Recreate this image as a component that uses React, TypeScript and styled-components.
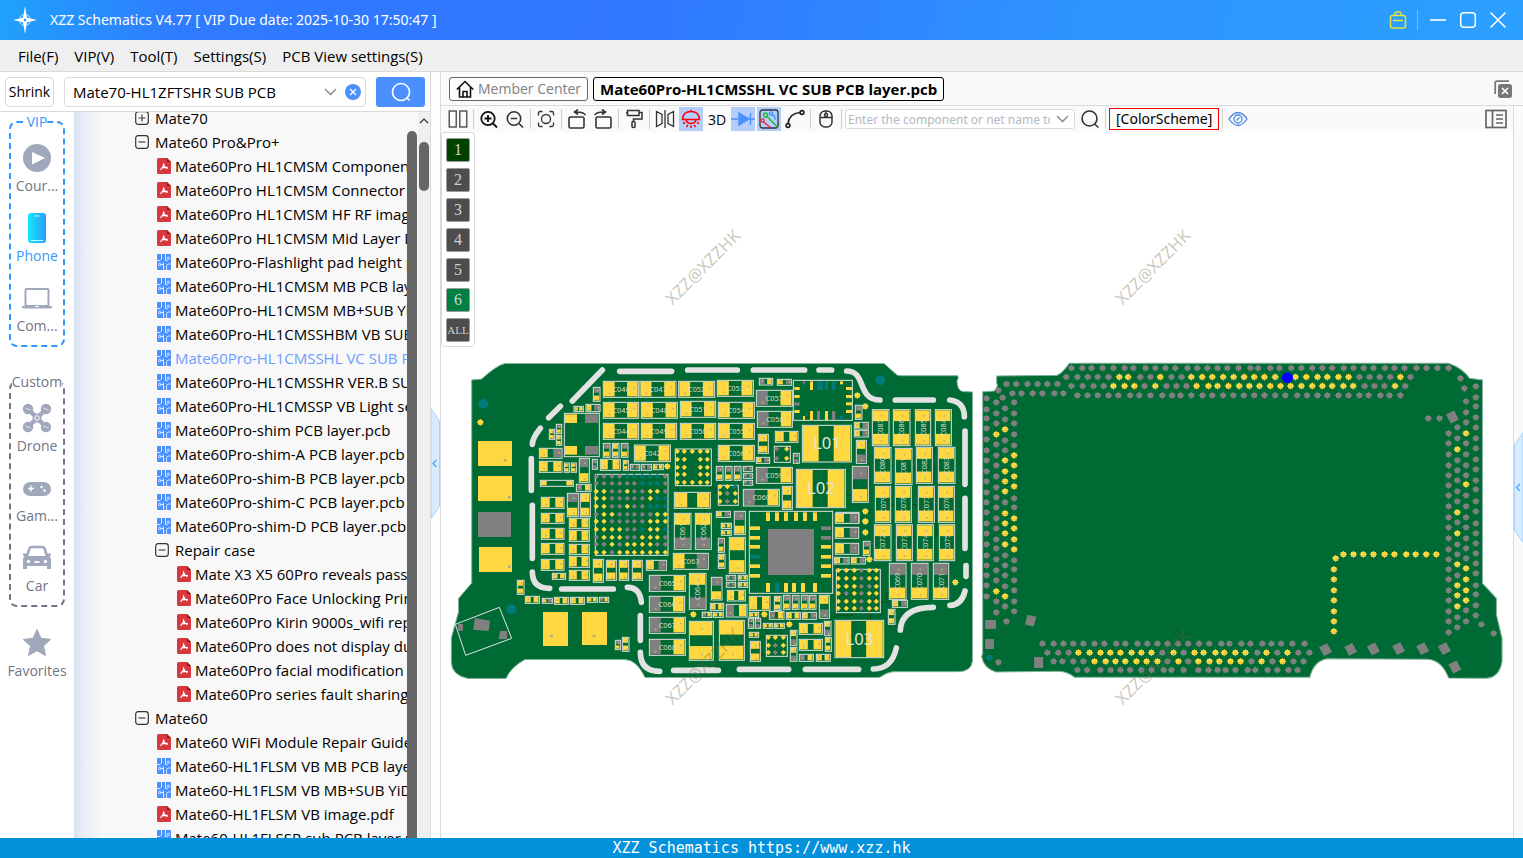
import React from "react";
import styled, { createGlobalStyle, css } from "styled-components";

const Global = createGlobalStyle`
  * { box-sizing: border-box; }
  html, body { margin: 0; height: 100%; }
  body { font-family: "Open Sans", "Noto Sans", sans-serif; font-size: 15px; color: #000; background: #fff; }
  #root { height: 100%; }
  button, input { font: inherit; color: inherit; }
  button { padding: 0; border: 0; background: none; cursor: pointer; }
  ul { list-style: none; margin: 0; padding: 0; }
  svg { display: block; flex: none; }
`;

/* ---------- window chrome ---------- */

const Page = styled.div`
  height: 100vh;
  display: flex;
  flex-direction: column;
  overflow: hidden;
`;

const TitleBar = styled.header`
  height: 40px;
  flex: none;
  display: flex;
  align-items: center;
  padding: 0 10px 0 12px;
  color: #fff;
  background: linear-gradient(100deg, #1fa2fb 0%, #2f7bff 12%, #3076ff 40%, #2e93ff 70%, #2ba0ff 100%);
`;

const AppTitle = styled.h1`
  margin: 0 auto 0 12px;
  font-family: "Noto Sans", sans-serif;
  font-size: 14px;
  line-height: 22px;
  font-weight: 400;
`;

const WindowButton = styled.button`
  width: 30px;
  height: 30px;
  display: grid;
  place-items: center;
`;

const TitleDivider = styled.span`
  width: 1px;
  height: 20px;
  margin: 0 5px 0 4px;
  background: #6fbdff;
`;

const MenuBar = styled.nav`
  height: 32px;
  flex: none;
  display: flex;
  align-items: center;
  gap: 16px;
  padding: 0 18px;
  background: #efefef;
  border-bottom: 1px solid #dadada;
`;

const MenuButton = styled.button`
  line-height: 24px;
`;

const Body = styled.div`
  flex: 1;
  min-height: 0;
  display: flex;
`;

const StatusBar = styled.footer`
  height: 20px;
  flex: none;
  line-height: 20px;
  text-align: center;
  color: #fff;
  background: #0391dc;
  font-family: "DejaVu Sans Mono", monospace;
  font-size: 15px;
`;

/* ---------- left panel ---------- */

const SidePanel = styled.aside`
  width: 431px;
  flex: none;
  display: flex;
  flex-direction: column;
  border-right: 1px solid #dadada;
`;

const SearchRow = styled.form`
  height: 40px;
  flex: none;
  display: flex;
  align-items: center;
  padding: 0 5px;
  border-bottom: 1px solid #dadada;
`;

const ShrinkButton = styled.button`
  width: 49px;
  height: 30px;
  border: 1px solid #dadada;
  border-radius: 4px;
  background: #fff;
  font-size: 14px;
`;

const Combo = styled.div`
  width: 302px;
  height: 30px;
  margin: 0 10px;
  display: flex;
  align-items: center;
  gap: 8px;
  padding: 0 4px 0 8px;
  border: 1px solid #dadada;
  border-radius: 4px;
`;

const ComboInput = styled.input`
  flex: 1;
  min-width: 0;
  height: 26px;
  padding: 0;
  border: 0;
  outline: 0;
  background: transparent;
  &::placeholder { color: #b4b8c2; opacity: 1; }
`;

const SearchButton = styled.button`
  width: 49px;
  height: 30px;
  display: grid;
  place-items: center;
  border-radius: 3px;
  background: #4c90ff;
`;

const SideBody = styled.div`
  flex: 1;
  min-height: 0;
  display: flex;
`;

const Rail = styled.nav`
  width: 74px;
  flex: none;
  overflow: hidden;
  font-size: 14px;
`;

const RailGroup = styled.fieldset<{ $tone: string; $last?: boolean }>`
  width: 56px;
  min-width: 0;
  margin: 0 9px ${(p) => (p.$last ? 21 : 25)}px;
  padding: 11px 0 9px;
  border: 2px dashed ${(p) => p.$tone};
  border-radius: 8px;
`;

const RailLegend = styled.legend<{ $tone: string }>`
  margin: 0 auto;
  padding: 0;
  line-height: 20px;
  color: ${(p) => p.$tone};
`;

const RailItem = styled.button<{ $active?: boolean }>`
  width: 100%;
  display: flex;
  flex-direction: column;
  align-items: center;
  gap: 3px;
  line-height: 20px;
  white-space: nowrap;
  color: ${(p) => (p.$active ? "#3b97fb" : "#6f7688")};
  & + & { margin-top: 17px; }
`;

const TreePanel = styled.div`
  flex: 1;
  min-width: 0;
  overflow: hidden;
  background: linear-gradient(90deg, #d6e0f2 0, #e9eef6 10px, #f8f8f8 28px);
`;

const Tree = styled.ul`
  margin-top: -6px;
`;

const TreeRow = styled.button<{ $depth: number; $folder: boolean; $selected?: boolean }>`
  height: 24px;
  width: 100%;
  display: flex;
  align-items: center;
  gap: ${(p) => (p.$folder ? 6 : 3)}px;
  padding-left: ${(p) => (p.$folder ? 61 : 62) + p.$depth * 20}px;
  white-space: nowrap;
  overflow: hidden;
  color: ${(p) => (p.$selected ? "#6f9dff" : "#000")};
`;

const InnerScroll = styled.div`
  width: 10px;
  flex: none;
  padding-top: 19px;
  display: flex;
  background: #f8f8f8;
`;

const InnerThumb = styled.div`
  flex: 1;
  border-radius: 5px 5px 0 0;
  background: #666;
`;

const OuterScroll = styled.div`
  width: 13px;
  flex: none;
  display: flex;
  flex-direction: column;
  align-items: center;
  background: #efefef;
  border-left: 1px solid #f8f8f8;
`;

const ScrollArrow = styled.button`
  height: 18px;
  width: 100%;
  display: grid;
  place-items: center;
`;

const OuterThumb = styled.div`
  width: 10px;
  height: 49px;
  margin-top: 12px;
  border-radius: 5px;
  background: #666;
`;

const CollapseStrip = styled.div<{ $right?: boolean }>`
  width: 10px;
  flex: none;
  background: ${(p) => (p.$right ? "#fafafa" : "#fcfffa")};
  ${(p) =>
    p.$right
      ? css`padding-top: 326px; border-left: 1px solid #dadada;`
      : css`padding-top: 336px; border-right: 1px solid #dadada;`}
`;

/* ---------- main panel ---------- */

const Main = styled.main`
  flex: 1;
  min-width: 0;
  display: flex;
  flex-direction: column;
`;

const TabRow = styled.div`
  height: 34px;
  flex: none;
  display: flex;
  align-items: center;
  gap: 5px;
  padding: 0 8px;
  background: #fafafa;
  border-bottom: 1px solid #dadada;
`;

const Tab = styled.button<{ $active?: boolean }>`
  height: 24px;
  display: flex;
  align-items: center;
  gap: 4px;
  padding: 0 6px;
  border: 1px solid ${(p) => (p.$active ? "#000" : "#666")};
  border-radius: 3px;
  background: #fdfdfd;
  color: ${(p) => (p.$active ? "#000" : "#808080")};
  font-size: ${(p) => (p.$active ? 15 : 14)}px;
  font-weight: ${(p) => (p.$active ? 700 : 400)};
  line-height: 20px;
`;

const CloseAll = styled.button`
  margin-left: auto;
  width: 24px;
  height: 24px;
  display: grid;
  place-items: center;
`;

const Workspace = styled.div`
  flex: 1;
  min-height: 0;
  display: flex;
`;

const Viewer = styled.section`
  flex: 1;
  min-width: 0;
  display: flex;
  flex-direction: column;
`;

const Toolbar = styled.div`
  height: 26px;
  flex: none;
  display: flex;
  align-items: center;
  gap: 2px;
  padding: 0 5px;
  background: #fafafa;
`;

const Tool = styled.button<{ $on?: boolean }>`
  width: 24px;
  height: 24px;
  flex: none;
  display: grid;
  place-items: center;
  font-size: 14px;
  background: ${(p) => (p.$on ? "#b5cdfb" : "transparent")};
`;

const ToolDivider = styled.span`
  width: 1px;
  height: 20px;
  flex: none;
  margin: 0 1px;
  background: #cfcfcf;
`;

const NetSearch = styled.div`
  width: 230px;
  height: 20px;
  margin-right: 1px;
  flex: none;
  display: flex;
  align-items: center;
  gap: 6px;
  padding: 0 5px 0 2px;
  border: 1px solid #dadada;
  border-radius: 3px;
  background: #fff;
  font-family: "Noto Sans", sans-serif;
  font-size: 12px;
`;

const ColorScheme = styled.button`
  height: 22px;
  flex: none;
  padding: 0 6px;
  border: 1px solid #f00;
  font-family: "Noto Sans", sans-serif;
  font-size: 14px;
  line-height: 20px;
`;

const PanelToggle = styled(Tool)`
  margin-left: auto;
`;

const Canvas = styled.div`
  flex: 1;
  min-height: 0;
  position: relative;
  overflow: hidden;
  background: #fff;
`;

const LayerPalette = styled.div`
  position: absolute;
  top: 0;
  left: 0;
  display: flex;
  flex-direction: column;
  gap: 6px;
  padding: 5px 4px 4px;
  border: 1px solid #dadada;
  border-radius: 3px;
  background: #fff;
`;

const LayerButton = styled.button<{ $fill: string; $wide?: boolean }>`
  width: 24px;
  height: 24px;
  border: 1px solid #9a9a9a;
  border-radius: 2px;
  background: ${(p) => p.$fill};
  color: #d0d0d0;
  font-family: "Liberation Serif", serif;
  font-size: ${(p) => (p.$wide ? 11 : 16)}px;
  line-height: 22px;
`;

/* ---------- small icons ---------- */

type IconProps = { children: React.ReactNode; size?: number; color?: string; sw?: number };
const Icon = ({ children, size = 20, color = "#333", sw = 1.5 }: IconProps) => (
  <svg width={size} height={size} viewBox={`0 0 ${size} ${size}`} fill="none" stroke={color} strokeWidth={sw}>
    {children}
  </svg>
);

const Chevron = ({ w = 13, color = "#8f949e" }: { w?: number; color?: string }) => (
  <svg width={w} height="8" viewBox="0 0 13 8" fill="none" stroke={color} strokeWidth="1.6">
    <path d="M1 1l5.500 5.500L12 1" />
  </svg>
);

const PdfIcon = () => (
  <svg width="16" height="16" viewBox="0 0 16 16">
    <path d="M1 1.500Q1 0 2.500 0H11l4 4v10.500Q15 16 13.500 16h-11Q1 16 1 14.500z" fill="#d7373f" />
    <path d="M11 0l4 4h-4z" fill="#8e1b22" />
    <path d="M7.600 5.200q.7 3-3.300 6.600M7.700 7q1 3.200 4.200 3.300M5.200 10.300q3-1.300 6.500-.8" stroke="#fff" strokeWidth="1.100" fill="none" />
  </svg>
);

const PcbIcon = () => (
  <svg width="16" height="16" viewBox="0 0 16 16">
    <rect x="1" width="14" height="16" rx="1" fill="#4c90ff" />
    <g stroke="#fff" strokeWidth=".8" fill="none">
      <path d="M5.500 0v5L4 6.500H1M9.500 0v6.500h2l1-1.200M4.800 10.500h2.700V16M7.500 10.500V8.500M10.500 16v-4.500l1.500-1.500h3" />
      <circle cx="12.500" cy="4.200" r="1.100" />
      <circle cx="3.700" cy="10.500" r="1.100" />
    </g>
  </svg>
);

const FolderBox = ({ open }: { open: boolean }) => (
  <Icon size={14} sw={1.2}>
    <rect x=".7" y=".7" width="12.600" height="12.600" rx="2.500" />
    <path d={open ? "M3.500 7h7" : "M3.500 7h7M7 3.500v7"} stroke="#444" />
  </Icon>
);

const G = "#a0a8bb";
const railIcons: Record<string, React.ReactNode> = {
  course: (
    <Icon size={30} sw={0}>
      <circle cx="15" cy="15" r="14" fill={G} />
      <path d="M10 9l13 6-13 6.500z" fill="#fff" />
    </Icon>
  ),
  phone: (
    <Icon size={30} sw={0}>
      <defs>
        <linearGradient id="phoneFill" x1="0" y1="0" x2="1" y2="0">
          <stop offset="0" stopColor="#12e8fb" />
          <stop offset="1" stopColor="#2e9cff" />
        </linearGradient>
      </defs>
      <rect x="6" y="0" width="18" height="30" rx="3" fill="url(#phoneFill)" />
      <path d="M13 3h4M9 27.500h12" stroke="#bff" strokeWidth="1.200" strokeLinecap="round" />
    </Icon>
  ),
  laptop: (
    <Icon size={30} sw={2} color={G}>
      <rect x="3.500" y="6" width="23" height="17" rx="1" />
      <path d="M0 23h30v1q0 1.500-2 1.500H2Q0 25.500 0 24z" fill={G} stroke="none" />
      <path d="M13 23.500h4" stroke="#fff" strokeWidth="1" />
    </Icon>
  ),
  drone: (
    <Icon size={30} sw={0}>
      <path d="M7 7l16 16M23 7L7 23" stroke={G} strokeWidth="4.500" />
      {[[6, 6], [24, 6], [6, 24], [24, 24]].map(([x, y]) => (
        <g key={`${x}-${y}`}>
          <circle cx={x} cy={y} r="5.200" fill={G} />
          <path d={`M${x - 2.5} ${y - 1}l5 2`} stroke="#fff" strokeWidth=".7" />
        </g>
      ))}
      <circle cx="15" cy="15" r="4.500" fill={G} />
      <circle cx="15" cy="15" r="2.300" fill="none" stroke="#fff" strokeWidth="1" />
    </Icon>
  ),
  game: (
    <Icon size={30} sw={0}>
      <rect x="1" y="9" width="28" height="14" rx="7" fill={G} />
      <path d="M9 12.500v6M6 15.500h6" stroke="#fff" strokeWidth="1.400" />
      <circle cx="19.500" cy="14" r="1.200" fill="#fff" />
      <circle cx="22.500" cy="17.500" r="1.200" fill="#fff" />
    </Icon>
  ),
  car: (
    <Icon size={30} sw={0}>
      <path d="M5 13L7.500 5.500Q8 4 10 4h10q2 0 2.500 1.500L25 13" fill="none" stroke={G} strokeWidth="2.500" />
      <path d="M1 10.500h4v2.500h20v-2.500h4v1.500l-1.500 1.500q1.500 1 1.500 3V26h-4v-3H5v3H1V16.500q0-2 1.500-3L1 12z" fill={G} />
      <path d="M12.500 19h5" stroke="#fff" strokeWidth="1.800" />
      <circle cx="6.500" cy="18.500" r="1.700" fill="#fff" />
      <circle cx="23.500" cy="18.500" r="1.700" fill="#fff" />
    </Icon>
  ),
  star: (
    <Icon size={30} sw={0}>
      <path d="M15 1.500l4 8.800 9.700 1.100-7.200 6.600 2 9.500-8.500-4.800-8.500 4.800 2-9.500L1.300 11.400l9.700-1.100z" fill={G} stroke={G} strokeWidth="1" strokeLinejoin="round" />
    </Icon>
  ),
};

/* ---------- circuit boards ---------- */

const C: Record<string, string> = { y: "#ffd740", g: "#808080", t: "#007a7a", n: "none" };
const BOARD = "#006a35";
const SILK = "#e2e2e2";
const MARK = "#bdb074";

const star = (x: number, y: number, r: number) => {
  const pts: string[] = [];
  for (let i = 0; i < 16; i++) {
    const a = (i * Math.PI) / 8;
    const k = i % 4 === 0 ? r : i % 2 === 0 ? r * 0.92 : r * 0.7;
    pts.push(`${(x + k * Math.cos(a)).toFixed(1)},${(y + k * Math.sin(a)).toFixed(1)}`);
  }
  return pts.join(" ");
};

const Star = ({ x, y, c = "y", r = 11 }: { x: number; y: number; c?: string; r?: number }) => (
  <polygon points={star(x, y, r)} fill={C[c]} />
);

/* One part per entry: direction, x, y, width, height, pad colours, designator. */
const Parts = ({ list }: { list: string }) => (
  <>
    {list
      .split(";")
      .map((s) => s.trim())
      .filter(Boolean)
      .map((s, i) => {
        const [d, xs, ys, ws, hs, pads = "yy", label] = s.split(/\s+/);
        const [x, y, w, h] = [xs, ys, ws, hs].map(Number);
        const flat = d === "h";
        const k = label ? 0.3 : 0.34;
        const pw = flat ? w * k : w - 5;
        const ph = flat ? h - 5 : h * k;
        return (
          <g key={i}>
            <rect x={x} y={y} width={w} height={h} fill={BOARD} stroke={SILK} strokeWidth="3" />
            <rect x={x + 2} y={y + 2} width={pw} height={ph} fill={C[pads[0]]} />
            <rect
              x={flat ? x + w - pw - 3 : x + 2}
              y={flat ? y + 2 : y + h - ph - 3}
              width={pw}
              height={ph}
              fill={C[pads[1]]}
            />
            <rect x={flat ? x + w - pw / 2 : x + w / 2} y={flat ? y + h / 3 : y + h - ph / 2} width="5" height="5" fill={MARK} />
            <rect x={flat ? x + pw / 2 : x + w / 2} y={flat ? y + h - 14 : y + ph / 2} width="5" height="5" fill={MARK} />
            {label && (
              <text
                x={x + w / 2}
                y={y + h / 2 + 8}
                fontSize="22"
                fill="#dcdcc8"
                textAnchor="middle"
                transform={flat ? undefined : `rotate(-90 ${x + w / 2} ${y + h / 2})`}
              >
                {label}
              </text>
            )}
          </g>
        );
      })}
  </>
);

const Inductor = ({ x, y, w, h, label }: { x: number; y: number; w: number; h: number; label: string }) => (
  <g>
    <rect x={x} y={y} width={w} height={h} fill={BOARD} stroke={SILK} strokeWidth="3" />
    <rect x={x + 2} y={y + 2} width={w * 0.32} height={h - 4} fill={C.y} />
    <rect x={x + w * 0.64} y={y + 2} width={w * 0.34} height={h - 4} fill={C.y} />
    <text x={x + w / 2} y={y + h / 2 + 17} fontSize="50" textAnchor="middle" fill="#e6e6d8">
      {label}
    </text>
  </g>
);

const Grid = ({ box, xs, ys, rows }: { box: number[]; xs: number[]; ys: number[]; rows: string[] }) => (
  <g>
    <rect x={box[0]} y={box[1]} width={box[2]} height={box[3]} fill={BOARD} stroke={SILK} strokeWidth="3" />
    {rows.map((r, j) =>
      r.split("").map((c, i) => {
        if (c === "-") return null;
        const [x, y] = [xs[i], ys[j]];
        return <path key={`${i}-${j}`} d={`M${x - 8} ${y}l4-4 4-4 4 4 4 4-4 4-4 4-4-4z`} fill={C[c]} />;
      })
    )}
  </g>
);

const Rects = ({ list }: { list: string }) => (
  <>
    {list.split(";").map((s, i) => {
      const [c, x, y, w, h] = s.trim().split(/\s+/);
      return <rect key={i} x={x} y={y} width={w} height={h} fill={C[c]} />;
    })}
  </>
);

const Silk = ({ d }: { d: string }) => (
  <path d={d} fill="none" stroke={SILK} strokeWidth="17" strokeLinecap="round" />
);

const Trace = ({ d }: { d: string }) => <path d={d} stroke="#004c10" strokeWidth="2.5" fill="none" />;

const LeftBoard = () => (
  <g fontFamily="'Noto Sans', sans-serif">
    <path
      fill={BOARD}
      stroke="#7fb499"
      d="M471.700 380l10-1Q497 365 505 363.500H884L897 375q2 .7 5 .7h55.700q1.500 2-.7 5 0 10 6 10.800l9.500.5V660q-.5 12-15.500 11.700H893q-7 1-11 4.300-2 1.500-4 1.500H645Q637 660 625 659.500H525q-14 7.500-19 19H468Q451.500 675 451.300 662v-24l7.200-26V598.500l13.200-15.500z"
    />
    <g transform="translate(445 355) scale(.33333)">
      <Trace d="M385 345v40M620 475v30h60M700 395v90M800 390l20 20M300 290v30M778 455v20M640 610v30" />
      <Silk d="M472 45L382 138M524 49H680M728 45H877M346 154L311 188M286 220Q262 250 262 268M259 311V406M262 451V610" />
      <Rects list="y 99 258 102 75;y 99 363 102 75;g 99 471 99 75;y 102 576 99 75" />
      <g fill={MARK}>
        <rect x="176" y="312" width="8" height="8" />
        <rect x="189" y="423" width="8" height="8" />
        <rect x="189" y="631" width="8" height="8" />
      </g>
      <circle cx="115" cy="146" r="15" fill="#007a7a" />
      <Star x={106} y={202} />
      <Star x={667} y={334} />
      <rect x="358" y="175" width="105" height="130" fill="none" stroke={SILK} strokeWidth="3" />
      <Rects list="y 360 178 36 26;g 420 178 40 26;y 360 273 36 26;g 420 273 40 26" />
      <Parts
        list="h 475 79 106 48 yy C046;h 585 79 108 48 yy C047;h 701 79 108 48 yy C052;
        h 475 142 106 48 yy C045;h 589 142 108 48 yy C048;h 706 139 106 48 yy C051;
        h 475 205 106 48 yy C044;h 589 205 106 48 yy C049;h 706 205 106 48 yy C050;
        h 568 270 108 50 yy C042;v 445 97 20 42 gy;h 387 154 28 16 yy;h 423 148 42 22 yg;
        v 313 223 16 30;v 334 208 16 28 gy;v 334 241 16 30;h 283 280 68 30 yg;h 283 319 68 33;
        v 358 324 15 28;v 379 324 15 28;v 403 310 30 72 gy;h 394 388 44 21 gy;
        h 289 427 68 33;h 289 475 68 30;v 367 415 33 70 gy;v 406 415 30 70;
        v 442 313 15 30 gg;h 466 313 60 33;v 475 265 20 42 gy;v 502 265 20 42;v 529 265 20 42 gy;
        v 535 316 15 30;h 556 328 28 18 gg;h 589 328 30 18 gg;h 625 328 30 16;
        h 688 412 108 48;v 688 475 50 108 yg C061;v 751 475 48 108 yg C062;"
      />
      <rect x="286" y="376" width="99" height="18" fill={BOARD} stroke={SILK} strokeWidth="3" />
      <Rects list="y 288 378 17 13;y 364 378 19 13" />
      <Grid
        box={[451, 358, 218, 243]}
        xs={[454, 477, 501, 524, 547, 568, 592, 616, 637, 661]}
        ys={[364, 385, 409, 430, 454, 478, 499, 523, 547, 568, 592]}
        rows={["ggggtttttg", "ggggggtttg", "yyggyggyyg", "yygggggytt", "yyggyggttt", "gyygggggyy", "yygggggyyy", "yyyyggtyyt", "gyyyggyyyg", "ggygyyyygg", "yygyyyyyyy"]}
      />
      <Grid
        box={[691, 282, 108, 110]}
        xs={[697, 718, 742, 766, 787]}
        ys={[289, 313, 337, 358, 382]}
        rows={["yyyyy", "yy-yy", "yy-yy", "yy-yy", "yyyyy"]}
      />
    </g>
    <g transform="translate(445 515) scale(.33333)">
      <Silk d="M262 171Q262 220 314 220M350 222H505M547 217Q585 217 589 262M586 302V376M586 412Q586 469 644 469M686 466H820" />
      <Parts
        list="h 289 40 68 33;h 289 85 68 33;h 289 133 68 33;h 373 10 60 30;h 373 46 60 33;h 373 88 60 30;
        h 373 124 60 33;h 373 166 60 30;h 322 175 40 18;v 217 196 20 42;h 241 244 42 21;h 292 250 30 15 yg;
        h 328 247 42 21;h 376 247 42 21;h 427 247 30 15;h 463 247 28 15 gy;v 445 133 30 69;v 484 136 30 60;
        v 523 136 28 60;v 562 136 30 60;h 604 136 60 30 yg;h 685 115 105 48 yg C063;h 613 181 108 48 gy C065;
        h 613 244 106 48 gy C066;h 613 307 108 48 gy C067;h 613 373 108 48 gy C068;v 733 175 50 108 yg C064;
        v 733 319 72 117;v 511 376 15 28 gy;v 532 367 20 42;h 772 292 28 15 gg"
      />
      <Rects list="y 294 291 75 102;y 411 291 75 99" />
      <g fill={MARK}>
        <rect x="315" y="359" width="9" height="8" />
        <rect x="443" y="359" width="9" height="8" />
      </g>
      <circle cx="199" cy="283" r="15" fill="#007a7a" />
      <Star x={745} y={298} />
      <path d="M31 328L163 277 200 370 62 421z" fill="none" stroke={SILK} strokeWidth="3" />
      <path d="M89 309l46 8-4 31-46-4zM39 327h15v20H39zM165 348h21v24h-25z" fill="#808080" />
    </g>
    <g transform="translate(700 355) scale(.33333)">
      <Trace d="M262 130v40M337 195v20M400 90h60M570 270v20h60M640 340h80M705 250v45h30M30 395l30 30M436 420h25M575 450h80M708 480v60h40" />
      <Silk d="M160 45H314M357 45H395M440 48C500 48 470 135 540 135M586 135H700M749 135Q793 140 793 185M795 228V388M795 430V580" />
      <Parts
        list="h 52 76 108 48 yy C053;h 55 142 108 48 yy C054;h 55 205 108 48 yy C055;h 55 271 108 48 yy C056;
        h 169 106 108 48 gy C057;h 172 169 105 48 gy C058;h 169 337 108 48 gy C059;h 130 403 108 50 gy C060;
        h 178 70 40 20 gy;h 232 73 42 18 yg;v 175 238 30 57;h 226 229 68 33;h 169 307 40 18 yg;v 280 295 18 30 gg;
        v 466 151 20 42 gy;h 463 202 42 20 yg;h 463 226 42 20 yg;v 469 256 30 69 yg;v 457 334 48 108 gy;
        v 247 394 30 69;v 517 164 50 108 yy C087;v 580 164 50 108 yy C086;v 646 164 46 108 yy C085;
        v 706 164 48 108 yy C084;v 523 277 50 108 yy C080;v 586 280 50 108 yy C081;v 649 277 48 108 yy C082;
        v 715 277 50 108 yy C083;v 526 394 46 108 yy C079;v 586 394 48 108 yy C078;v 655 394 48 108 yy C077;
        v 715 394 48 108 yy C076;v 49 334 20 42 gy;v 76 334 20 42 gy;v 103 334 20 42 gy;h 130 334 28 15 gg;
        h 130 355 28 15 gg;h 130 376 28 15 gg;h 49 469 42 18 yg;v 103 469 33 70 gy;h 409 472 68 33 yg;h 64 505 30 14"
      />
      <rect x="280" y="76" width="177" height="120" fill={BOARD} stroke={SILK} strokeWidth="3" />
      <Rects list="g 308 79 7 7;y 330 79 9 26;t 351 79 18 26;t 375 79 9 26;t 396 79 11 26;y 420 79 9 9;y 283 96 16 9;y 283 120 16 9;g 283 142 16 10;y 283 165 16 9;y 438 96 18 9;y 438 120 18 9;y 438 142 18 9;y 438 165 18 9;y 309 183 6 12;y 330 168 9 27;g 351 168 9 27;y 375 168 9 27;g 396 168 10 27;t 420 183 9 12" />
      <Grid box={[223, 274, 48, 48]} xs={[230, 260]} ys={[282, 310]} rows={["gy", "gy"]} />
      <Grid box={[55, 391, 60, 60]} xs={[60, 82, 106]} ys={[395, 415, 439]} rows={["yyt", "ygy", "ygy"]} />
      <Inductor x={307} y={211} w={147} h={110} label="L01" />
      <Inductor x={289} y={343} w={147} h={115} label="L02" />
      <circle cx="541" cy="76" r="15" fill="#007a7a" />
      <Star x={472} y={121} />
      <Star x={496} y={154} />
      <Star x={496} y={469} />
      <Star x={496} y={499} />
    </g>
    <g transform="translate(700 515) scale(.33333)">
      <Trace d="M180 360v60h20M390 315l20-15h50l10-10M512 290v30M540 262h20v-30h70M415 150v20M195 340l15 25M230 340l20 20" />
      <Silk d="M798 152V184M795 228Q785 270 750 271M700 277Q605 277 601 345M589 399Q575 462 520 462M476 463H316M266 463H118M-10 465H40" />
      <rect x="148" y="-11" width="250" height="246" fill={BOARD} stroke={SILK} strokeWidth="3" />
      <Rects list="g 204 42 138 138;y 198 -8 12 26;y 225 -8 12 26;y 252 -8 12 26;y 282 -8 12 26;y 309 -8 12 26;y 339 -8 12 26;y 198 204 12 27;t 225 204 12 27;y 252 204 12 27;y 276 204 12 27;y 303 204 12 27;y 339 204 12 27;y 150 34 30 11;y 150 63 30 11;y 150 90 30 11;t 150 120 30 11;y 150 148 30 11;y 150 177 30 11;g 363 34 30 11;g 363 63 30 11;y 363 90 30 11;y 363 120 30 11;y 363 148 30 11;y 363 177 30 11" />
      <Parts
        list="v 523 29 50 108 yy C072;v 589 29 48 108 yy C073;v 652 29 48 108 yy C074;v 718 29 46 108 yy C075;
        v 568 145 50 108 gy C069;v 634 145 50 108 gy C070;v 700 145 46 108 gy C071;h 406 -5 70 30 yg;h 406 37 70 33 yg;
        h 406 85 70 33 yg;v 490 79 20 42 gy;h 403 127 44 20 yg;h 454 127 42 20 yg;h 577 256 45 21 yg;v 565 283 20 45;
        v 88 67 48 108;v 55 70 18 42 gy;v 55 118 20 42;h 64 25 30 15;h 64 46 30 15;v 34 187 32 68 gy;h 79 181 28 15 gg;
        h 115 181 28 15;h 79 202 28 15 gg;h 115 202 28 15;h 82 226 54 32;h 31 265 40 21;h 79 268 62 38 gy;h 7 292 28 15 gy;
        h 40 292 30 15;h 148 292 28 15;h 208 289 44 24 gy;h 259 292 42 21;h 307 292 42 21 yg;h 148 244 62 42;
        v 223 244 20 42;v 250 241 20 42 gy;v 277 241 20 42 gy;v 304 241 20 42 gy;v 328 241 20 42 gy;v 358 241 30 69 yg;
        v 145 310 16 30 gg;v 166 310 16 30 gg;h 190 325 28 15;h 223 325 30 15;h 298 325 69 33;h 298 373 69 33;
        v 373 319 20 42 yg;v 376 367 18 42;v 271 346 20 45 yg;v 271 397 20 42 yg;h 298 418 42 21 gy;h 349 418 42 21;
        v 58 316 75 120;h 148 352 28 15;v 151 379 30 60"
      />
      <Grid
        box={[409, 163, 132, 130]}
        xs={[415, 439, 463, 484, 508, 529]}
        ys={[166, 190, 214, 235, 259, 280]}
        rows={["yyygyy", "yyygyy", "yyyggy", "ygygyy", "yyygyy", "yyygyy"]}
      />
      <Grid box={[199, 361, 63, 63]} xs={[205, 226, 250]} ys={[367, 391, 412]} rows={["yyy", "ygy", "ygy"]} />
      <Inductor x={405} y={316} w={146} h={112} label="L03" />
      <Star x={193} y={298} />
      <Star x={268} y={328} />
      <Star x={496} y={19} />
      <Star x={496} y={52} />
      <Star x={508} y={133} />
      <Star x={766} y={202} />
    </g>
  </g>
);

/* Rows and columns of test points; a trailing y marks a yellow one. */
const pointRows: [number, string][] = [
  [39, "276 307 333 365 396 428 453 488 516 545 573 608 636 665 694 722 754 788 810 845 871 905 934 965 994 1022 1055 1083 1112 1140 1173 1200 1229 1263 1292 1323 1355"],
  [66, "261 293 323 351 382 413y 438y 473 502 530y 562 591 619y 650y 679y 710y 740y 770y 799y 828y 859y 917y 948y 980y 1008y 1040y 1069y 1100 1129 1158 1188 1217y 1246"],
  [93, "276 308 339 368 396y 428y 456y 485 516y 548 576 605 634y 668y 694y 725y 756y 785y 814y 845y 874y 903y 934y 965y 994y 1022y 1054y 1082y 1115 1143 1171 1202y 1231"],
  [121, "293 322 351 382 410 444 470 502 536 564 588 619 651 679 710 739 769 799 828 859 888 922 950 980 1008 1040 1069 1100 1126 1160 1186 1217"],
  [87, "90 118 150 179 207 236"],
  [115, "107 133 165 193 227 253"],
  [106, "67"],
  [128, "79"],
  [866, "193 225 253 281 310 342 370 404 430 465 493 522 551 581 610 641 670 705 728 762 788 822 848 876 908 943"],
  [893, "207 238 268 296y 328y 359y 387y 416y 448y 476y 505y 536 568y 597 628y 654y 688y 713y 745y 774y 808 834y 865 894y 925 957"],
  [919, "225 250 281 310 342y 374y 402y 430y 462y 491y 522y 551 582y 610 639y 671y 699y 731y 760y 791 820y 851 880y 911 940"],
  [945, "293 321 359 388 416 444 476 505 540 562 597 639 668 694 717 745 780 802 837 865 897 923"],
  [598, "1054y 1083y 1111y 1140y 1172y 1200y 1234y 1261y 1291y 1320y"],
  [610, "1032y"],
  [190, "1297 1329"],
  [922, "67"],
  [799, "90"],
];

const pointCols: [number, string][] = [
  [33, "130 163 190 220 253 286 316 349 379 412 442 472 505 535 568 601 631 661 691 724"],
  [61, "142 175 205 238y 268 301 331 364 397 427 457 490 520 553 580 613 646 676 709y 739 772"],
  [86, "160 193 223y 256 286 316y 349y 379y 409y 442 475y 505y 535y 568y 601 631 661 694 724y 754"],
  [112, "142 175 205 238 271 301y 331y 364y 394y 430 457 490y 520y 553y 583y 616 643 676 706 739 769"],
  [1355, "235 265 298 331 361 391 421 454 487 517 550 583 613 643 673 706 736 769 799 832"],
  [1380, "217 250 283y 316 346 376 409 439 472y 502 535y 568 598 628y 661 691y 721y 754y 787 817"],
  [1405, "139 172 202 235y 265 298 331 361 388y 421 454 487 517 550 580 610 640y 673y 706y 736y 766 799"],
  [1433, "94 127 154 187 217 250 280 313 343 376 403 439 469 505 535 565 595 625 655 691 718 751 781"],
  [1389, "70"],
  [1400, "100"],
  [1449, "808"],
  [1484, "835"],
  [1027, "643y 673y 706y 736y 769y 799y 829y"],
];

const Point = ({ x, y, hot }: { x: number; y: number; hot: boolean }) => (
  <g>
    <Star x={x} y={y} r={11} c={hot ? "y" : "g"} />
    {hot && <rect x={x} y={y + 1} width="5" height="4" fill="#d0c060" />}
  </g>
);

const tilted: [number, number, number][] = [
  [159, 797, 14], [1003, 884, -28], [1075, 883, -28], [1140, 882, -28], [1212, 881, -28],
  [1281, 881, -28], [1343, 881, -28], [1373, 936, -28], [1366, 186, -28],
];

const RightBoard = () => (
  <g transform="translate(975 355) scale(.3495 .33333)">
    <path
      fill={BOARD}
      stroke="#7fb499"
      strokeWidth="3"
      d="M22 110L55 108Q68 95 62 85V63L235 61Q250 55 270 25H1355Q1395 40 1415 70L1452 75V685L1492 730V780L1508 850V920Q1500 968 1462 970L1355 969Q1335 915 1295 913L1010 911Q970 915 958 967H285Q265 950 240 949L60 951Q25 940 19 905L22 895z"
    />
    {pointRows.map(([y, xs]) =>
      xs.split(" ").map((s) => <Point key={`${y}-${s}`} x={parseInt(s, 10)} y={y} hot={s.endsWith("y")} />)
    )}
    {pointCols.map(([x, ys]) =>
      ys.split(" ").map((s) => <Point key={`${x}-${s}`} x={x} y={parseInt(s, 10)} hot={s.endsWith("y")} />)
    )}
    <Rects list="g 29 795 31 27;g 29 852 25 30;g 169 906 26 33" />
    {tilted.map(([x, y, a]) => (
      <rect key={x} x={x - 13} y={y - 15} width="26" height="30" fill={C.g} transform={`rotate(${a} ${x} ${y})`} />
    ))}
    <Star x={41} y={908} c="t" />
    <circle cx="894" cy="68" r="16" fill="#00f" />
  </g>
);

const BoardDrawing = () => (
  <svg width="1072" height="706" viewBox="441 132 1072 706" role="img" aria-label="PCB layout">
    <LeftBoard />
    <RightBoard />
    <g fontFamily="'Noto Sans', sans-serif" fontSize="17" fill="#6e6444" fillOpacity=".36" textAnchor="middle">
      {[[703, 267], [1153, 267], [703, 667], [1153, 667]].map(([x, y]) => (
        <text key={`${x}-${y}`} x={x} y={y + 6} transform={`rotate(-45 ${x} ${y})`}>
          XZZ@XZZHK
        </text>
      ))}
    </g>
  </svg>
);

/* ---------- data ---------- */

type Node = { kind: "open" | "closed" | "pdf" | "pcb"; depth: number; text: string; selected?: boolean };
const n = (kind: Node["kind"], depth: number, text: string, selected?: boolean): Node => ({ kind, depth, text, selected });

const treeRows: Node[] = [
  n("closed", 0, "Mate70"),
  n("open", 0, "Mate60 Pro&Pro+"),
  n("pdf", 1, "Mate60Pro HL1CMSM Component"),
  n("pdf", 1, "Mate60Pro HL1CMSM Connector d"),
  n("pdf", 1, "Mate60Pro HL1CMSM HF RF image"),
  n("pdf", 1, "Mate60Pro HL1CMSM Mid Layer D"),
  n("pcb", 1, "Mate60Pro-Flashlight pad height p"),
  n("pcb", 1, "Mate60Pro-HL1CMSM MB PCB laye"),
  n("pcb", 1, "Mate60Pro-HL1CMSM MB+SUB YiD"),
  n("pcb", 1, "Mate60Pro-HL1CMSSHBM VB SUB"),
  n("pcb", 1, "Mate60Pro-HL1CMSSHL VC SUB PC", true),
  n("pcb", 1, "Mate60Pro-HL1CMSSHR VER.B SUB"),
  n("pcb", 1, "Mate60Pro-HL1CMSSP VB Light se"),
  n("pcb", 1, "Mate60Pro-shim PCB layer.pcb"),
  n("pcb", 1, "Mate60Pro-shim-A PCB layer.pcb"),
  n("pcb", 1, "Mate60Pro-shim-B PCB layer.pcb"),
  n("pcb", 1, "Mate60Pro-shim-C PCB layer.pcb"),
  n("pcb", 1, "Mate60Pro-shim-D PCB layer.pcb"),
  n("open", 1, "Repair case"),
  n("pdf", 2, "Mate X3 X5 60Pro reveals passw"),
  n("pdf", 2, "Mate60Pro Face Unlocking Prin"),
  n("pdf", 2, "Mate60Pro Kirin 9000s_wifi repa"),
  n("pdf", 2, "Mate60Pro does not display due"),
  n("pdf", 2, "Mate60Pro facial modification c"),
  n("pdf", 2, "Mate60Pro series fault sharing.p"),
  n("open", 0, "Mate60"),
  n("pdf", 1, "Mate60 WiFi Module Repair Guide"),
  n("pcb", 1, "Mate60-HL1FLSM VB MB PCB laye"),
  n("pcb", 1, "Mate60-HL1FLSM VB MB+SUB YiD"),
  n("pdf", 1, "Mate60-HL1FLSM VB image.pdf"),
  n("pcb", 1, "Mate60-HL1FLSSR sub PCB layer.p"),
];

const CollapseHandle = ({ label }: { label: string }) => (
  <button type="button" aria-label={label}>
    <svg width="9" height="111" viewBox="0 0 9 111">
      <path d="M0 .5L8.500 13v85L0 110.500z" fill="#d9ebfe" stroke="#a5d2fa" />
      <path d="M5.500 52L2 55.500 5.500 59" fill="none" stroke="#4ea5f5" strokeWidth="1.300" />
    </svg>
  </button>
);

const ExpandHandle = ({ label }: { label: string }) => (
  <button type="button" aria-label={label}>
    <svg width="9" height="111" viewBox="0 0 9 111">
      <path d="M9 .5L.5 13v85L9 110.500z" fill="#d9ebfe" stroke="#a5d2fa" />
      <path d="M6 52L2.500 55.500 6 59" fill="none" stroke="#4ea5f5" strokeWidth="1.300" />
    </svg>
  </button>
);

const RailButton = ({ icon, text, active }: { icon: string; text: string; active?: boolean }) => (
  <RailItem type="button" $active={active}>
    {railIcons[icon]}
    {text}
  </RailItem>
);

export default function App() {
  return (
    <Page>
      <Global />
      <TitleBar>
        <svg width="26" height="30" viewBox="0 0 26 30">
          <circle cx="13" cy="15" r="5.500" fill="none" stroke="#9fd6ff" strokeWidth="1.200" />
          <path d="M13 1l2 11.800L25 15l-10 2.200L13 29l-2-11.800L1 15l10-2.200z" fill="#fff" />
          <circle cx="13" cy="15" r="1.300" fill="#2e90ff" />
        </svg>
        <AppTitle>XZZ Schematics V4.77 [ VIP Due date: 2025-10-30 17:50:47 ]</AppTitle>
        <WindowButton aria-label="Toolbox">
          <Icon size={18} color="#e3e635" sw={1.5}>
            <rect x="1.500" y="4.500" width="15" height="12.500" rx="2" />
            <path d="M6 4.500V2.500Q6 1 7.500 1h3Q12 1 12 2.500v2M4 9.500h10" />
          </Icon>
        </WindowButton>
        <TitleDivider />
        <WindowButton aria-label="Minimize">
          <Icon size={18} color="#fff" sw={1.6}><path d="M1 9h16" /></Icon>
        </WindowButton>
        <WindowButton aria-label="Maximize">
          <Icon size={18} color="#fff"><rect x="1.700" y="1.700" width="14.600" height="14.600" rx="3" /></Icon>
        </WindowButton>
        <WindowButton aria-label="Close">
          <Icon size={18} color="#fff"><path d="M1.500 1.500l15 15M16.500 1.500l-15 15" /></Icon>
        </WindowButton>
      </TitleBar>

      <MenuBar>
        {["File(F)", "VIP(V)", "Tool(T)", "Settings(S)", "PCB View settings(S)"].map((m) => (
          <MenuButton key={m}>{m}</MenuButton>
        ))}
      </MenuBar>

      <Body>
        <SidePanel>
          <SearchRow onSubmit={(e) => e.preventDefault()}>
            <ShrinkButton type="button">Shrink</ShrinkButton>
            <Combo>
              <ComboInput aria-label="Model search" defaultValue="Mate70-HL1ZFTSHR SUB PCB" />
              <Chevron />
              <Icon size={16} sw={1.3} color="#fff">
                <circle cx="8" cy="8" r="8" fill="#4c90ff" stroke="none" />
                <path d="M5 5l6 6M11 5l-6 6" />
              </Icon>
            </Combo>
            <SearchButton type="submit" aria-label="Search">
              <Icon size={20} color="#fff" sw={1.6}>
                <circle cx="10" cy="10" r="8.500" />
                <path d="M15.500 15.500l3 3" />
              </Icon>
            </SearchButton>
          </SearchRow>

          <SideBody>
            <Rail>
              <RailGroup $tone="#2f97ff">
                <RailLegend $tone="#3b97fb">VIP</RailLegend>
                <RailButton icon="course" text="Cour..." />
                <RailButton icon="phone" text="Phone" active />
                <RailButton icon="laptop" text="Com..." />
              </RailGroup>
              <RailGroup $tone="#6f7688" $last>
                <RailLegend $tone="#6f7688">Custom</RailLegend>
                <RailButton icon="drone" text="Drone" />
                <RailButton icon="game" text="Gam..." />
                <RailButton icon="car" text="Car" />
              </RailGroup>
              <RailButton icon="star" text="Favorites" />
            </Rail>

            <TreePanel>
              <Tree>
                {treeRows.map((r, i) => {
                  const folder = r.kind === "open" || r.kind === "closed";
                  return (
                    <li key={i}>
                      <TreeRow $depth={r.depth} $folder={folder} $selected={r.selected}>
                        {folder ? <FolderBox open={r.kind === "open"} /> : r.kind === "pdf" ? <PdfIcon /> : <PcbIcon />}
                        {r.text}
                      </TreeRow>
                    </li>
                  );
                })}
              </Tree>
            </TreePanel>
            <InnerScroll><InnerThumb /></InnerScroll>
            <OuterScroll>
              <ScrollArrow aria-label="Scroll up">
                <Icon size={10} sw={1.2}><path d="M1 7l4-4 4 4" /></Icon>
              </ScrollArrow>
              <OuterThumb />
            </OuterScroll>
          </SideBody>
        </SidePanel>

        <CollapseStrip><CollapseHandle label="Collapse file list" /></CollapseStrip>

        <Main>
          <TabRow>
            <Tab>
              <Icon size={18} color="#111" sw={1.6}>
                <path d="M.8 9.500L9 1.500l8.200 8M3.500 7.500V17h11V7.500M7 17v-5.500h4V17" />
              </Icon>
              Member Center
            </Tab>
            <Tab $active>Mate60Pro-HL1CMSSHL VC SUB PCB layer.pcb</Tab>
            <CloseAll aria-label="Close all tabs">
              <svg width="18" height="18" viewBox="0 0 18 18">
                <path d="M1.200 14V3q0-1.800 1.800-1.800h12" fill="none" stroke="#777" strokeWidth="1.800" />
                <rect x="4" y="4" width="14" height="14" rx="2.500" fill="#777" />
                <path d="M8 8l6 6M14 8l-6 6" stroke="#fff" strokeWidth="1.600" />
              </svg>
            </CloseAll>
          </TabRow>

          <Workspace>
            <Viewer>
              <Toolbar>
                <Tool aria-label="Split view">
                  <Icon sw={1.2}><rect x="1.200" y="2" width="7" height="16" /><rect x="11.800" y="2" width="7" height="16" /></Icon>
                </Tool>
                <ToolDivider />
                <Tool aria-label="Zoom in">
                  <Icon color="#111" sw={1.8}><circle cx="9" cy="9.500" r="6.700" /><path d="M14 14.500l4 4M5.500 9.500h7M9 6v7" /></Icon>
                </Tool>
                <Tool aria-label="Zoom out">
                  <Icon sw={1.6}><circle cx="9" cy="9.500" r="6.700" /><path d="M14 14.500l4 4M5.800 9.500h6.400" /></Icon>
                </Tool>
                <ToolDivider />
                <Tool aria-label="Fit to window">
                  <Icon sw={1.3}>
                    <circle cx="10" cy="10" r="4.500" />
                    <path d="M2.500 6.500V4q0-1.500 1.500-1.500h2.500M13.500 2.500H16q1.500 0 1.500 1.500v2.500M17.500 13.500V16q0 1.500-1.500 1.500h-2.500M6.500 17.500H4q-1.500 0-1.500-1.500v-2.500" />
                  </Icon>
                </Tool>
                <ToolDivider />
                <Tool aria-label="Rotate left">
                  <Icon sw={1.6}><rect x="2" y="8" width="15" height="11" rx="1.500" /><path d="M18.500 6Q16 2.500 8 3M11 .5L7.500 3l3.500 2.500" /></Icon>
                </Tool>
                <Tool aria-label="Rotate right">
                  <Icon sw={1.6}><rect x="3" y="8" width="15" height="11" rx="1.500" /><path d="M1.500 6Q4 2.500 12 3M9 .5L12.500 3 9 5.500" /></Icon>
                </Tool>
                <ToolDivider />
                <Tool aria-label="Paint">
                  <Icon sw={1.5}><path d="M3.500 1.500H15v5H3.500zM3.500 4H2M15 3.500h3v6.500H9.500v2.500" /><rect x="8" y="12.500" width="3" height="6" rx="1" /></Icon>
                </Tool>
                <ToolDivider />
                <Tool aria-label="Mirror">
                  <Icon sw={1.3}><path d="M1.500 2.500L7 5.500v9l-5.500 3zM10 1v18M18.500 2.500L13 5.500v9l5.500 3z" /></Icon>
                </Tool>
                <Tool $on aria-label="Highlight">
                  <Icon color="#f00" sw={1.5}>
                    <path d="M1.500 10.500Q2 2.500 10 2.500t8.500 8zM5 11q1 3.500 5 3.500t5-3.500M10 .8v1.500M2 14.500l2-1M18 14.500l-2-1M5.500 18l1.300-2M14.500 18l-1.300-2M10 16.500V19" />
                  </Icon>
                </Tool>
                <Tool>3D</Tool>
                <Tool $on aria-label="Diode mode">
                  <Icon size={24} color="#4c90ff" sw={1.4}><path d="M0 12h24M19.500 6v12" /><path d="M8 6v12l10-6z" fill="#4c90ff" /></Icon>
                </Tool>
                <Tool $on aria-label="Net view">
                  <Icon sw={1.3}>
                    <rect x="1" y="1" width="18" height="18" rx="2.500" />
                    <path d="M8 7.500L19 18.500" stroke="#1b2" /><circle cx="6.500" cy="6" r="2" stroke="#1b2" />
                    <path d="M12.500 5.500q3 .5 4 5" stroke="#39f" /><circle cx="12" cy="4.500" r="1.600" stroke="#39f" />
                    <path d="M4.500 13l7 5.500" stroke="#f22" /><circle cx="3.500" cy="11.500" r="1.600" stroke="#f22" />
                  </Icon>
                </Tool>
                <Tool aria-label="Curve">
                  <Icon color="#222" sw={1.6}><circle cx="3" cy="16.500" r="1.900" /><circle cx="17" cy="3.500" r="1.900" /><path d="M3 14.500Q4 4.500 15 3.500" /></Icon>
                </Tool>
                <ToolDivider />
                <Tool aria-label="Mouse settings">
                  <Icon sw={1.5}><rect x="4" y="2" width="12" height="16" rx="5" /><path d="M4 8.500h12M10 2v2.500M10 7v1.500" /><circle cx="10" cy="6" r="1.500" /></Icon>
                </Tool>
                <ToolDivider />
                <NetSearch>
                  <ComboInput aria-label="Component or net name" placeholder="Enter the component or net name to search" />
                  <Chevron color="#8f949e" />
                </NetSearch>
                <Tool aria-label="Find">
                  <Icon sw={1.6}><circle cx="9.500" cy="9.500" r="7.500" /><path d="M14.500 15l4 3.500" /></Icon>
                </Tool>
                <ToolDivider />
                <ColorScheme>[ColorScheme]</ColorScheme>
                <ToolDivider />
                <Tool aria-label="Show or hide">
                  <Icon color="#4a86e0" sw={1.3}>
                    <path d="M1 10q9-13 18 0-9 13-18 0z" /><circle cx="10" cy="10" r="4" /><path d="M8.500 11.500l3-3" />
                  </Icon>
                </Tool>
                <PanelToggle aria-label="Side panel">
                  <Icon size={22} color="#666" sw={1.7}><rect x="1" y="2.500" width="20" height="17" /><path d="M7.500 2.500v17M11 7h7M11 11h7M11 15h7" /></Icon>
                </PanelToggle>
              </Toolbar>

              <Canvas>
                <BoardDrawing />
                <LayerPalette>
                  {["1", "2", "3", "4", "5", "6", "ALL"].map((l) => (
                    <LayerButton key={l} $wide={l === "ALL"} $fill={l === "1" ? "#004200" : l === "6" ? "#008040" : "#4d4d4d"}>
                      {l}
                    </LayerButton>
                  ))}
                </LayerPalette>
              </Canvas>
            </Viewer>
            <CollapseStrip $right><ExpandHandle label="Expand side panel" /></CollapseStrip>
          </Workspace>
        </Main>
      </Body>

      <StatusBar>XZZ Schematics https://www.xzz.hk</StatusBar>
    </Page>
  );
}
